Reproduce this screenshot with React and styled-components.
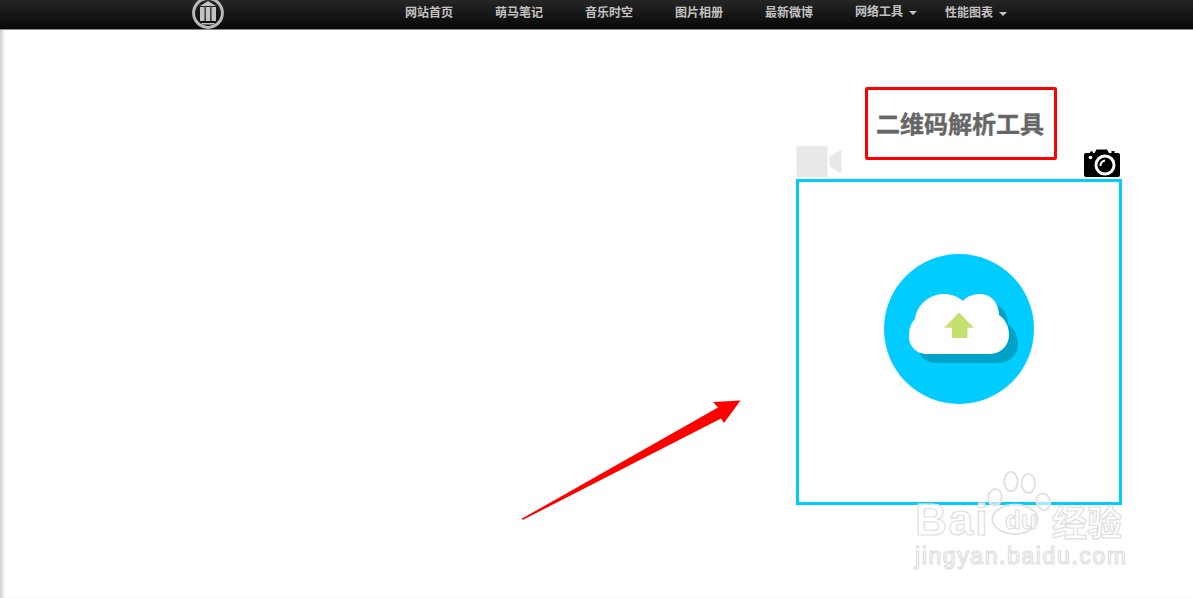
import React from 'react'
import styled, { createGlobalStyle } from 'styled-components'

const CJK = '"Liberation Sans", "Noto Sans CJK SC", sans-serif'

const GlobalStyle = createGlobalStyle`
  html, body {
    margin: 0;
    padding: 0;
    background: #fff;
    font-family: ${CJK};
  }
`

const navItems = [
  { label: '网站首页' },
  { label: '萌马笔记' },
  { label: '音乐时空' },
  { label: '图片相册' },
  { label: '最新微博' },
  { label: '网络工具', caret: true, raised: true },
  { label: '性能图表', caret: true },
]

const Logo = () => (
  <LogoSvg viewBox="0 0 32 32">
    <circle cx="16" cy="16" r="14.4" fill="none" stroke="#b8b8b8" strokeWidth="3" />
    <path d="M16 4 L24 9 H8 Z" fill="#c4c4c4" />
    <rect x="8" y="10" width="4.5" height="14" fill="#c4c4c4" />
    <rect x="13.75" y="10" width="4.5" height="14" fill="#c4c4c4" />
    <rect x="19.5" y="10" width="4.5" height="14" fill="#c4c4c4" />
    <rect x="9.5" y="26" width="13" height="1.5" fill="#c4c4c4" />
  </LogoSvg>
)

const VideoIcon = () => (
  <svg width="46" height="31" viewBox="0 0 46 31">
    <rect x="0.5" y="0" width="31" height="31" rx="2.5" fill="#e8e8e8" />
    <path d="M34 10 L44 4.5 Q45.5 4 45.5 5.5 V25.5 Q45.5 27 44 26.5 L34 21 Q33.5 20.5 33.5 20 V11 Q33.5 10.5 34 10 Z" fill="#e8e8e8" />
  </svg>
)

const CameraIcon = () => (
  <svg width="36" height="28" viewBox="0 0 36 28">
    <path
      d="M2 4 H6 V2.5 H9 V4 H10.5 L12.5 0.5 H23 L25 4 H27.5 V2 H30.5 V4 H34 Q36 4 36 6 V26 Q36 28 34 28 H2 Q0 28 0 26 V6 Q0 4 2 4 Z"
      fill="#000"
    />
    <circle cx="21" cy="16" r="10.5" fill="#fff" />
    <circle cx="21" cy="16" r="7.6" fill="#000" />
    <path d="M16.5 17 A5 5 0 0 1 21 11.5" fill="none" stroke="#fff" strokeWidth="2" />
    <circle cx="6.5" cy="8.5" r="1.8" fill="#fff" />
  </svg>
)

const CLOUD_PATH =
  'M42 100 A17 17 0 0 1 25 81 C25 73 28 68 31 65 C33 50 46 40 60 40 C67 40 73 42 79 47 C83 42 90 40 96 40 C107 40 115 49 115 61 C121 65 125 72 125 81 A19 19 0 0 1 106 100 Z'

const CloudBadge = () => (
  <svg width="150" height="150" viewBox="0 0 150 150">
    <circle cx="75" cy="75" r="75" fill="#00ccff" />
    <path d={CLOUD_PATH} transform="translate(9 9)" fill="#00a2c8" />
    <path d={CLOUD_PATH} fill="#fff" />
    <path d="M75 58.5 L90 73.7 H83.5 V84 H68 V73.7 H60 Z" fill="#c6e070" />
  </svg>
)

const App = () => (
  <Page>
    <GlobalStyle />
    <TopBar>
      <Logo />
      <NavList>
        {navItems.map((item) => (
          <NavItem key={item.label} $raised={item.raised} $caret={item.caret}>
            {item.label}
            {item.caret && <Caret />}
          </NavItem>
        ))}
      </NavList>
    </TopBar>

    <Main>
      <Tool>
        <ToolHeader>
          <VideoSlot>
            <VideoIcon />
          </VideoSlot>
          <Title>二维码解析工具</Title>
          <CameraSlot>
            <CameraIcon />
          </CameraSlot>
        </ToolHeader>
        <DropZone>
          <CloudBadge />
        </DropZone>
      </Tool>
    </Main>

    <Arrow viewBox="0 0 222 124">
      <path d="M0 118.6 L196 7.5 L191 2 L218.5 0.5 L202 23 L199 18.5 L0.6 120 Z" fill="#ff0000" />
    </Arrow>

    <Watermark>
      <PawPrint viewBox="0 0 240 120">
        <g transform="translate(-15 -10) scale(0.3333)" fill="rgba(255,255,255,0.6)" stroke="#e2e2e2" strokeWidth="6">
          <ellipse cx="333" cy="65" rx="20" ry="29" />
          <ellipse cx="385" cy="70" rx="20" ry="29" />
          <ellipse cx="285" cy="112" rx="20" ry="25" transform="rotate(10 285 112)" />
          <ellipse cx="430" cy="125" rx="20" ry="25" transform="rotate(-15 430 125)" />
          <ellipse cx="345" cy="178" rx="68" ry="44" />
        </g>
      </PawPrint>
      <BrandRow>
        <BrandBai>Bai</BrandBai>
        <BrandDu>du</BrandDu>
        <BrandCn>经验</BrandCn>
      </BrandRow>
      <Domain>jingyan.baidu.com</Domain>
    </Watermark>
  </Page>
)

const Page = styled.div`
  position: relative;
  min-height: 598px;
  overflow: hidden;
  box-shadow: inset 5px 0 4px -3px #c4c4c4;
`

const TopBar = styled.nav`
  display: flex;
  align-items: flex-start;
  height: 29px;
  padding-left: 192px;
  overflow: hidden;
  background: linear-gradient(#252525, #080808);
  border-bottom: 1px solid #8a8a8a;
`

const LogoSvg = styled.svg`
  flex: none;
  width: 32px;
  height: 32px;
  margin-top: -3px;
`

const NavList = styled.ul`
  display: flex;
  list-style: none;
  margin: 0 0 0 160px;
  padding: 0;
`

const NavItem = styled.li`
  display: flex;
  align-items: center;
  height: 23px;
  margin-top: ${({ $raised }) => ($raised ? '-1px' : '0')};
  padding: 0 ${({ $caret }) => ($caret ? '7px' : '21px')} 0 21px;
  color: #c2c2c2;
  font-size: 12px;
  font-weight: 700;
  white-space: nowrap;
`

const Caret = styled.span`
  width: 0;
  height: 0;
  margin: 4px 0 0 6px;
  border-top: 4px solid #c2c2c2;
  border-left: 4px solid transparent;
  border-right: 4px solid transparent;
`

const Main = styled.main`
  display: flex;
  justify-content: flex-end;
  padding: 57px 71px 0 0;
`

const Tool = styled.section`
  width: 326px;
`

const ToolHeader = styled.header`
  display: grid;
  grid-template-columns: 69px 192px 1fr;
  align-items: end;
  height: 92px;
`

const VideoSlot = styled.div`
  display: flex;
  margin-bottom: 2px;
`

const CameraSlot = styled.div`
  display: flex;
  justify-content: flex-end;
  margin: 0 2px 2px 0;
`

const Title = styled.h1`
  align-self: start;
  box-sizing: border-box;
  height: 73px;
  margin: 0;
  padding-right: 2px;
  border: 3px solid #ff0000;
  border-radius: 2px;
  color: #666;
  font-size: 24px;
  font-weight: 700;
  line-height: 69px;
  text-align: center;
  -webkit-text-stroke: 0.4px #666;
`

const DropZone = styled.div`
  display: flex;
  align-items: center;
  justify-content: center;
  box-sizing: border-box;
  width: 326px;
  height: 326px;
  padding-bottom: 26px;
  border: 3px solid #00ccff;
`

const Arrow = styled.svg`
  position: absolute;
  left: 522px;
  top: 400px;
  width: 222px;
  height: 124px;
`

const Watermark = styled.div`
  position: absolute;
  left: 915px;
  top: 470px;
  width: 220px;
  height: 110px;
  pointer-events: none;
`

const PawPrint = styled.svg`
  position: absolute;
  left: 0;
  top: 0;
  width: 240px;
  height: 120px;
`

const outlined = `
  color: rgba(255, 255, 255, 0.8);
  -webkit-text-stroke: 1.2px #e0e0e0;
`

const BrandRow = styled.div`
  position: absolute;
  left: 0;
  top: 27px;
  display: flex;
  align-items: center;
  height: 46px;
  ${outlined}
`

const BrandBai = styled.span`
  width: 90px;
  font-family: "Liberation Sans", sans-serif;
  font-size: 44px;
  font-weight: 700;
  letter-spacing: 2px;
`

const BrandDu = styled.span`
  width: 47px;
  font-family: "Liberation Sans", sans-serif;
  font-size: 26px;
  font-weight: 700;
`

const BrandCn = styled.span`
  font-size: 35px;
  font-weight: 700;
  white-space: nowrap;
`

const Domain = styled.div`
  position: absolute;
  left: 0;
  top: 73px;
  font-family: "Liberation Sans", sans-serif;
  font-size: 23px;
  letter-spacing: 1.6px;
  white-space: nowrap;
  ${outlined}
`

export default App
